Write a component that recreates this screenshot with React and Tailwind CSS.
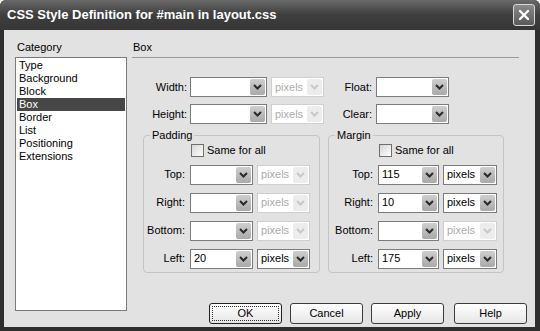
import React from "react";

const font = { fontFamily: '"Liberation Sans", Arial, sans-serif' };

function Chevron({ disabled }) {
  return (
    <svg width="9" height="6" viewBox="0 0 9 6">
      <polyline
        points="1,1 4.5,4.5 8,1"
        fill="none"
        stroke={disabled ? "#c8c8c8" : "#2a2a2a"}
        strokeWidth="2"
      />
    </svg>
  );
}

function Select({ value, width, disabled }) {
  return (
    <div
      className={`flex h-[20px] items-stretch border bg-white ${
        disabled ? "border-[#cfcfcf]" : "border-[#7c7c7c]"
      }`}
      style={{ width }}
    >
      <div
        className={`flex flex-1 items-center pl-[3px] text-[11px] ${
          disabled ? "text-[#ababab]" : "text-black"
        }`}
      >
        {value}
      </div>
      <div
        className={`m-px flex w-[15px] items-center justify-center rounded-[2px] ${
          disabled
            ? "bg-[#ececec]"
            : "bg-gradient-to-b from-[#cfcfcf] to-[#a9a9a9]"
        }`}
      >
        <Chevron disabled={disabled} />
      </div>
    </div>
  );
}

function Checkbox({ label }) {
  return (
    <div className="flex items-center gap-[3px]">
      <div className="h-[13px] w-[13px] border border-[#6f6f6f] bg-gradient-to-br from-[#d6d6d6] to-white" />
      <span className="text-[11px]">{label}</span>
    </div>
  );
}

function Button({ label, focused }) {
  return (
    <div
      className={`flex h-[21px] w-[73px] items-center justify-center rounded-[3px] border bg-gradient-to-b from-white to-[#e6e6e6] text-[11px] ${
        focused ? "border-[#222]" : "border-[#3c3c3c]"
      }`}
    >
      {focused ? (
        <div className="flex h-[15px] w-[67px] items-center justify-center border border-dotted border-[#333]">
          {label}
        </div>
      ) : (
        label
      )}
    </div>
  );
}

function BoxRow({ label, value, unit, unitDisabled, labelW, valueW, unitW }) {
  return (
    <div className="flex h-[20px] items-center">
      <div className="text-right text-[11px]" style={{ width: labelW }}>
        {label}
      </div>
      <div className="ml-[5px]">
        <Select value={value} width={valueW} />
      </div>
      <div className="ml-[4px]">
        <Select value={unit} width={unitW} disabled={unitDisabled} />
      </div>
    </div>
  );
}

function Group({ title, rows, labelW, valueW, unitW, width }) {
  return (
    <fieldset
      className="rounded-[4px] border border-[#c4c4c4] px-0 pb-[3px] pt-0"
      style={{ width }}
    >
      <legend className="ml-[6px] px-[2px] text-[11px] leading-[13px]">
        {title}
      </legend>
      <div style={{ paddingLeft: labelW + 6 }}>
        <Checkbox label="Same for all" />
      </div>
      <div className="mt-[6px] flex flex-col gap-[8px]">
        {rows.map((r) => (
          <BoxRow
            key={r[0]}
            label={r[0]}
            value={r[1]}
            unit="pixels"
            unitDisabled={!r[1]}
            labelW={labelW}
            valueW={valueW}
            unitW={unitW}
          />
        ))}
      </div>
    </fieldset>
  );
}

export default function App() {
  const categories = [
    "Type",
    "Background",
    "Block",
    "Box",
    "Border",
    "List",
    "Positioning",
    "Extensions",
  ];

  return (
    <div
      className="flex h-[331px] w-[540px] flex-col overflow-hidden rounded-t-[6px] bg-[#2e2e2e] text-black"
      style={font}
    >
      <div className="flex h-[30px] items-center justify-between bg-gradient-to-b from-[#6a6a6a] via-[#3e3e3e] to-[#363636] pl-[7px] pr-[5px]">
        <span className="text-[13px] font-bold text-white">
          CSS Style Definition for #main in layout.css
        </span>
        <div className="flex h-[22px] w-[22px] items-center justify-center rounded-[3px] border border-[#d8d8d8] bg-gradient-to-b from-[#8a8a8a] to-[#5a5a5a]">
          <svg width="12" height="12" viewBox="0 0 12 12">
            <path
              d="M2 2 L10 10 M10 2 L2 10"
              stroke="white"
              strokeWidth="2.4"
              strokeLinecap="round"
            />
          </svg>
        </div>
      </div>

      <div className="mb-[4px] ml-[4px] mr-[5px] flex flex-1 bg-[#e2e2e2] pt-[9px] text-[11px]">
        <div className="ml-[11px] flex w-[112px] flex-col">
          <div className="h-[16px] pl-[2px] leading-[16px]">Category</div>
          <div className="mt-[2px] h-[254px] border border-[#7a7a7a] bg-white pt-[1px]">
            {categories.map((c) => (
              <div
                key={c}
                className={`mx-px h-[13px] pl-[2px] leading-[13px] ${
                  c === "Box" ? "bg-[#474747] text-white" : ""
                }`}
              >
                {c}
              </div>
            ))}
          </div>
        </div>

        <div className="ml-[5px] flex w-[395px] flex-col pb-[3px]">
          <div className="h-[16px] pl-[1px] leading-[16px]">Box</div>
          <div className="mt-[2px] w-[387px] border-t border-[#9a9a9a]" />

          <div className="mt-[19px] flex flex-col gap-[7px]">
            {[
              ["Width:", "Float:"],
              ["Height:", "Clear:"],
            ].map(([a, b]) => (
              <div key={a} className="flex h-[20px] items-center">
                <div className="w-[55px] text-right">{a}</div>
                <div className="ml-[3px]">
                  <Select width={77} />
                </div>
                <div className="ml-[4px]">
                  <Select value="pixels" width={53} disabled />
                </div>
                <div className="w-[48px] text-right">{b}</div>
                <div className="ml-[4px]">
                  <Select width={73} />
                </div>
              </div>
            ))}
          </div>

          <div className="ml-[11px] mt-[5px] flex gap-[8px]">
            <Group
              title="Padding"
              width={177}
              labelW={41}
              valueW={63}
              unitW={53}
              rows={[
                ["Top:", ""],
                ["Right:", ""],
                ["Bottom:", ""],
                ["Left:", "20"],
              ]}
            />
            <Group
              title="Margin"
              width={176}
              labelW={44}
              valueW={61}
              unitW={54}
              rows={[
                ["Top:", "115"],
                ["Right:", "10"],
                ["Bottom:", ""],
                ["Left:", "175"],
              ]}
            />
          </div>

          <div className="flex-1" />
          <div className="flex justify-end gap-[8px]">
            <Button label="OK" focused />
            <Button label="Cancel" />
            <Button label="Apply" />
            <div className="ml-[2px]">
              <Button label="Help" />
            </div>
          </div>
        </div>
      </div>
    </div>
  );
}
